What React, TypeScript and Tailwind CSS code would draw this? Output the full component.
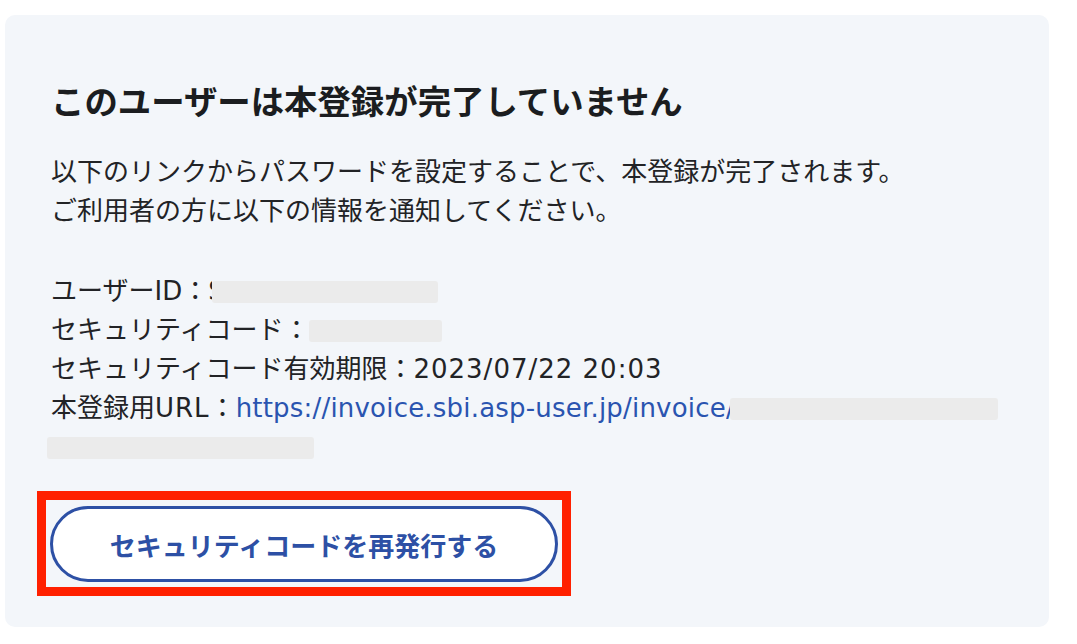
function Redact({ w, className = "" }: { w: string; className?: string }) {
  return <span className={`inline-block h-[22px] rounded-[3px] bg-[#ebebeb] ${w} ${className}`} />;
}

export default function App() {
  return (
    <div className="min-h-screen bg-white pl-[5px] pt-[15px] font-['DejaVu_Sans','Noto_Sans_CJK_JP',sans-serif]">
      <section className="h-[612px] w-[1044px] rounded-[10px] bg-[#f3f6fa] pl-[46px] pt-[63px] text-[#222326]">
        <h1 className="font-['Noto_Sans_CJK_JP',sans-serif] text-[33.4px] font-bold leading-[44px] text-[#1b1d20]">
          このユーザーは本登録が完了していません
        </h1>

        <p className="mt-[31px] text-[26px] leading-[39px]">
          以下のリンクからパスワードを設定することで、本登録が完了されます。
          <br />
          ご利用者の方に以下の情報を通知してください。
        </p>

        <div className="mt-[41px] text-[26px]">
          <div className="flex h-[39px] items-center">
            ユーザーID：
            <span className="inline-block w-[4px] overflow-hidden">S</span>
            <Redact w="w-[226px]" />
          </div>
          <div className="flex h-[39px] items-center">
            セキュリティコード：
            <Redact w="w-[133px]" />
          </div>
          <div className="flex h-[39px] items-center">
            セキュリティコード有効期限：<span className="tracking-[1px]">2023/07/22 20:03</span>
          </div>
          <div className="flex h-[39px] items-center">
            本登録用<span className="tracking-[1px]">URL</span>：
            <span className="tracking-[0.2px] text-[#2a54b0]">https://invoice.sbi.asp-user.jp/invoice</span>
            <span className="inline-block w-[4px] overflow-hidden text-[#2a54b0]">/</span>
            <Redact w="w-[268px]" />
          </div>
          <div className="flex h-[39px] items-center">
            <Redact w="w-[267px]" className="-ml-[4px]" />
          </div>
        </div>

        <div className="-ml-[14px] mt-[24px] inline-block border-[9px] border-[#ff2000] px-[4px] pb-[5px] pt-[6px]">
          <button className="block h-[76px] w-[508px] rounded-full border-[3px] border-[#2d50a5] bg-white font-['Noto_Sans_CJK_JP',sans-serif] text-[26px] font-bold text-[#2d50a5]">
            セキュリティコードを再発行する
          </button>
        </div>
      </section>
    </div>
  );
}
